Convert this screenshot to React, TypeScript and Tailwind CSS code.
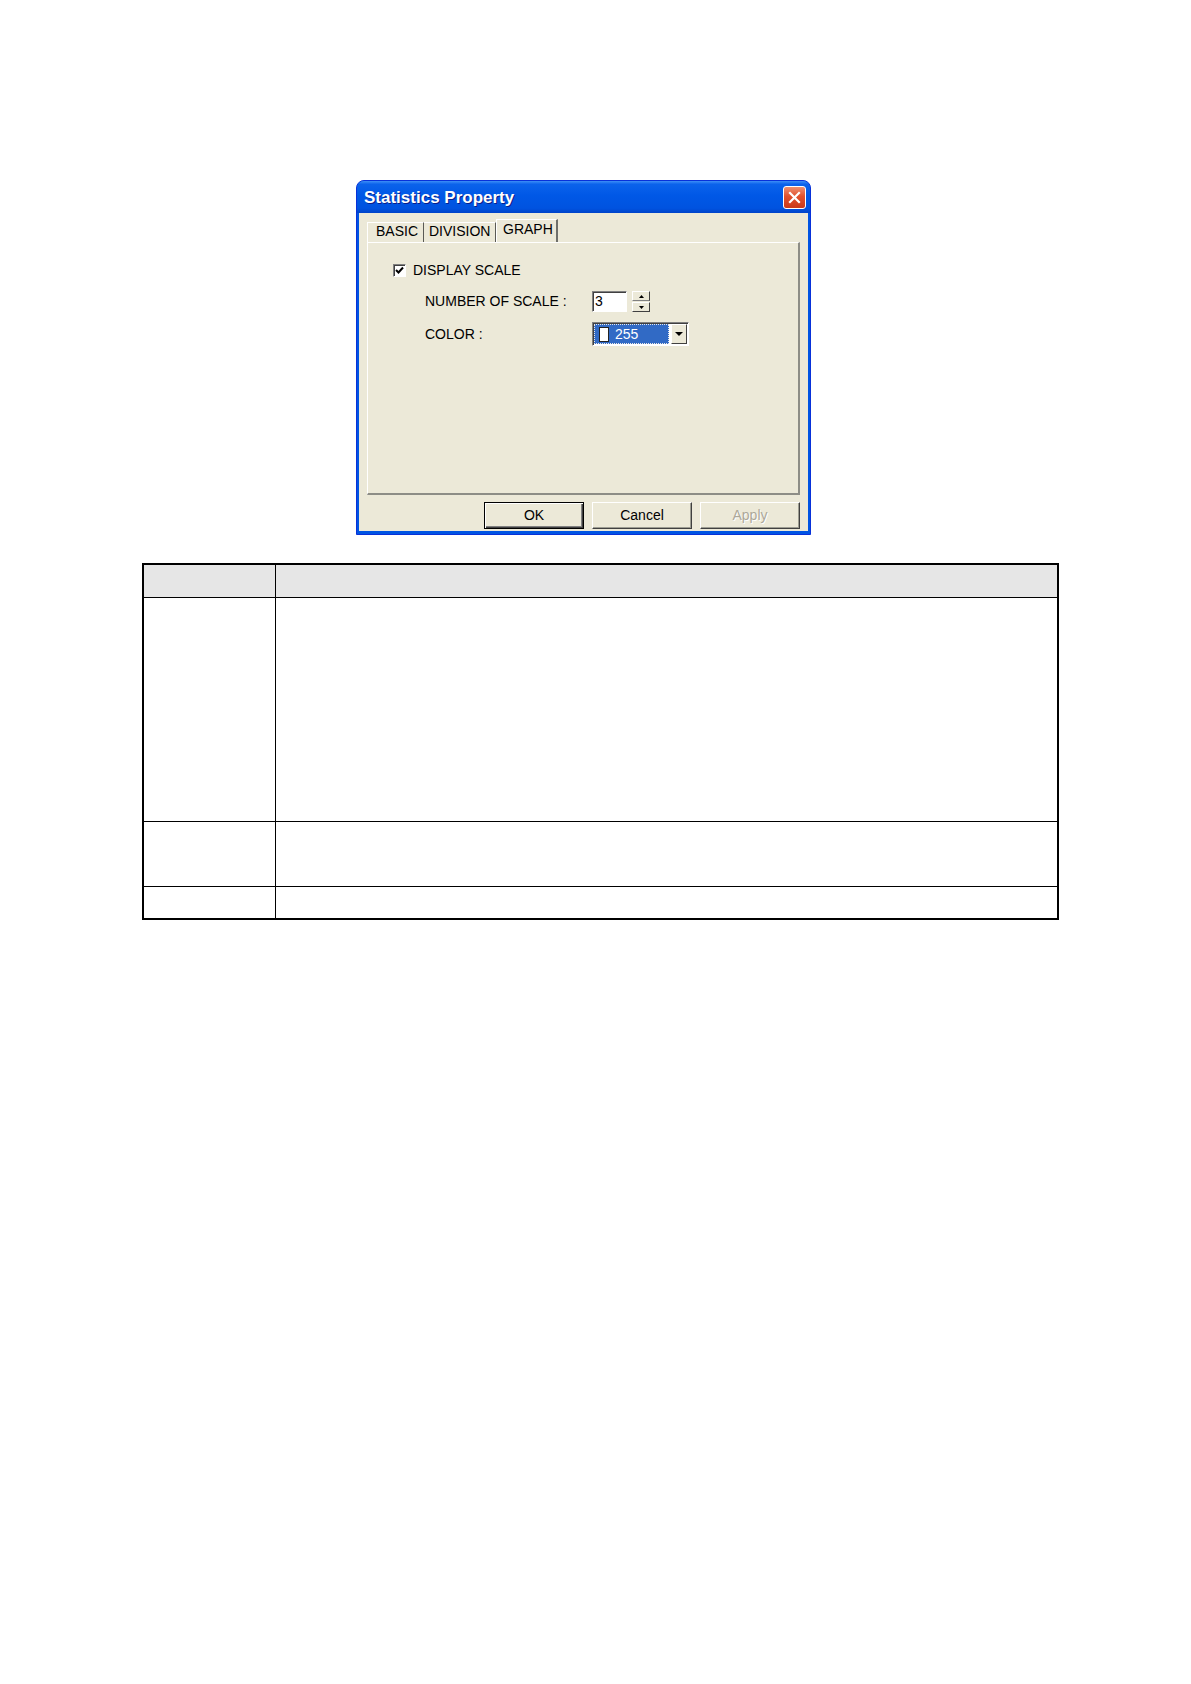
import React from "react";

const font = { fontFamily: '"Liberation Sans", Arial, sans-serif' };

function Tab({ label, active, className = "" }: { label: string; active?: boolean; className?: string }) {
  if (active) {
    return (
      <div
        className={`relative z-10 -mb-[1px] flex h-[23px] items-start border-l border-t border-white border-r-2 border-r-[#6f6f6a] bg-[#ece9d8] pt-[1px] leading-[16px] ${className}`}
      >
        {label}
      </div>
    );
  }
  return (
    <div
      className={`mt-[3px] flex h-[20px] items-start border-t border-white border-r border-r-[#5a5a55] bg-[#ece9d8] leading-[16px] ${className}`}
    >
      {label}
    </div>
  );
}

function Button({ label, primary, disabled }: { label: string; primary?: boolean; disabled?: boolean }) {
  return (
    <div
      className={`flex h-[27px] w-[100px] items-center justify-center bg-[#ece9d8] text-[14px] ${
        primary
          ? "border border-black shadow-[inset_1px_1px_0_#ffffff,inset_-1px_-1px_0_#404040,inset_-2px_-2px_0_#808080]"
          : "border-l border-t border-white border-r border-b border-r-[#404040] border-b-[#404040] shadow-[inset_-1px_-1px_0_#9d9d92]"
      } ${disabled ? "text-[#aca899] [text-shadow:1px_1px_0_#ffffff]" : "text-black"}`}
    >
      {label}
    </div>
  );
}

function Dialog() {
  return (
    <div
      className="ml-[356px] h-[355px] w-[455px] overflow-hidden rounded-t-[8px] border border-[#0831d9] bg-[#0054e3]"
      style={font}
    >
      {/* Title bar */}
      <div className="flex h-[32px] items-center justify-between bg-[linear-gradient(180deg,#3d8ef7_0%,#0b62eb_10%,#0058e6_45%,#0053e0_85%,#0043c9_100%)] pl-[7px] pr-[4px] pt-[1px]">
        <span className="text-[17px] font-bold text-white [text-shadow:1px_1px_0_#0a1e8a]">Statistics Property</span>
        <div className="flex h-[23px] w-[23px] items-center justify-center rounded-[3px] border border-white bg-[linear-gradient(180deg,#ee8f70_0%,#e1512d_45%,#c9391a_100%)]">
          <svg width="13" height="13" viewBox="0 0 13 13">
            <path d="M2 2 L11 11 M11 2 L2 11" stroke="#ffffff" strokeWidth="2.2" strokeLinecap="square" />
          </svg>
        </div>
      </div>

      {/* Body */}
      <div className="mx-[2px] flex h-[318px] flex-col bg-[#ece9d8] px-[8px] pt-[6px] text-[14px] text-black">
        {/* Tabs */}
        <div className="flex h-[23px] items-start">
          <Tab label="BASIC" className="w-[57px] border-l pl-[8px]" />
          <Tab label="DIVISION" className="w-[72px] pl-[5px]" />
          <Tab label="GRAPH" active className="w-[62px] pl-[6px]" />
        </div>

        {/* Panel */}
        <div className="flex h-[253px] flex-col border-l border-t border-white border-r-2 border-b-2 border-r-[#8d8d86] border-b-[#8d8d86] pl-[25px] pt-[17px]">
          <div className="flex h-[20px] items-center gap-[7px]">
            <div className="flex h-[13px] w-[13px] items-center justify-center border border-[#808080] border-r-white border-b-white bg-white shadow-[inset_1px_1px_0_#404040]">
              <svg width="9" height="9" viewBox="0 0 9 9">
                <path d="M1 4 L3.5 6.5 L8 1.5" stroke="#000" strokeWidth="2" fill="none" />
              </svg>
            </div>
            <span>DISPLAY SCALE</span>
          </div>

          <div className="mt-[11px] flex h-[21px] items-center pl-[32px]">
            <span className="w-[167px]">NUMBER OF SCALE :</span>
            <div className="flex h-[21px] w-[35px] items-center border border-[#808080] border-r-white border-b-white bg-white pl-[2px] shadow-[inset_1px_1px_0_#404040]">
              3
            </div>
            <div className="ml-[5px] flex h-[21px] w-[18px] flex-col">
              <div className="flex h-[10px] items-center justify-center border border-white border-r-[#404040] border-b-[#808080]">
                <svg width="5" height="3" viewBox="0 0 5 3">
                  <path d="M0 3 L2.5 0 L5 3 Z" fill="#000" />
                </svg>
              </div>
              <div className="mt-[1px] flex h-[10px] items-center justify-center border border-white border-r-[#404040] border-b-[#404040]">
                <svg width="5" height="3" viewBox="0 0 5 3">
                  <path d="M0 0 L5 0 L2.5 3 Z" fill="#000" />
                </svg>
              </div>
            </div>
          </div>

          <div className="mt-[10px] flex h-[24px] items-center pl-[32px]">
            <span className="w-[167px]">COLOR :</span>
            <div className="flex h-[24px] w-[97px] items-center border border-[#808080] border-r-white border-b-white bg-white p-[1px] shadow-[inset_1px_1px_0_#404040]">
              <div className="flex h-full flex-1 items-center border border-dotted border-[#e8e8e8] bg-[#316ac5] pl-[4px]">
                <div className="h-[15px] w-[10px] border border-[#222] bg-white" />
                <span className="ml-[6px] text-white">255</span>
              </div>
              <div className="ml-[2px] flex h-full w-[16px] items-center justify-center border border-white border-r-[#404040] border-b-[#404040] bg-[#ece9d8]">
                <svg width="8" height="4" viewBox="0 0 8 4">
                  <path d="M0 0 L8 0 L4 4 Z" fill="#000" />
                </svg>
              </div>
            </div>
          </div>
        </div>

        {/* Buttons */}
        <div className="mt-[7px] flex justify-end gap-[8px]">
          <Button label="OK" primary />
          <Button label="Cancel" />
          <Button label="Apply" disabled />
        </div>
      </div>
    </div>
  );
}

function PropTable() {
  const rows = [223, 64, 31];
  return (
    <div className="ml-[142px] mt-[28px] w-[917px] border-2 border-black" style={font}>
      <div className="flex h-[32px] bg-[#e6e6e6]">
        <div className="w-[132px] border-r border-black" />
        <div className="flex-1" />
      </div>
      {rows.map((h, i) => (
        <div key={i} className="flex border-t border-black" style={{ height: h + 1 }}>
          <div className="w-[132px] border-r border-black" />
          <div className="flex-1" />
        </div>
      ))}
    </div>
  );
}

export default function App() {
  return (
    <div className="min-h-[1684px] w-[1191px] bg-white pt-[180px]">
      <Dialog />
      <PropTable />
    </div>
  );
}
